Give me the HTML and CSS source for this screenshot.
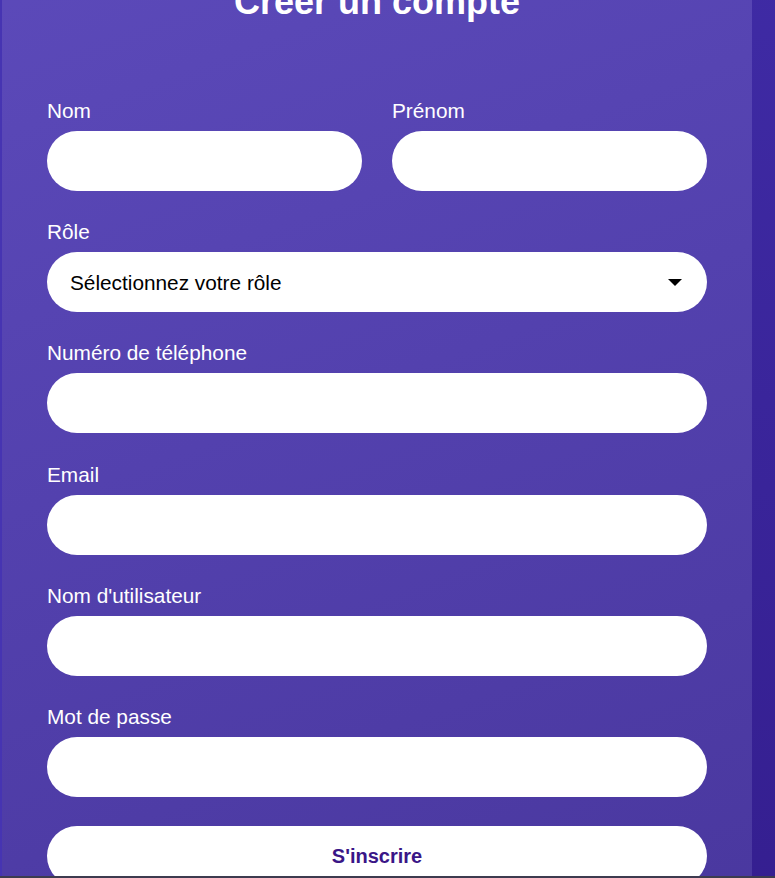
FILE: index.html
```html
<!DOCTYPE html>
<html lang="fr">

<head>
    <meta charset="UTF-8">
    <meta name="viewport" content="width=device-width, initial-scale=1.0">
    <title>Créer un compte</title>
    <link rel="stylesheet" href="styles.css">
</head>

<body>
    <div class="card">
        <h1>Créer un compte</h1>
        <form class="register-form">
            <div class="row">
                <div class="field">
                    <label for="nom">Nom</label>
                    <input type="text" id="nom">
                </div>
                <div class="field">
                    <label for="prenom">Prénom</label>
                    <input type="text" id="prenom">
                </div>
            </div>
            <div class="field">
                <label for="role">Rôle</label>
                <div class="select-wrap">
                    <select id="role">
                        <option value="">Sélectionnez votre rôle</option>
                        <option value="etudiant">Étudiant</option>
                        <option value="enseignant">Enseignant</option>
                    </select>
                </div>
            </div>
            <div class="field">
                <label for="tel">Numéro de téléphone</label>
                <input type="tel" id="tel">
            </div>
            <div class="field">
                <label for="email">Email</label>
                <input type="email" id="email">
            </div>
            <div class="field">
                <label for="username">Nom d'utilisateur</label>
                <input type="text" id="username">
            </div>
            <div class="field">
                <label for="password">Mot de passe</label>
                <input type="password" id="password">
            </div>
            <button type="submit" class="btn">S'inscrire</button>
        </form>
    </div>
    <div class="bottom-bar"></div>

    <script src="script.js"></script>
</body>

</html>
```

FILE: styles.css
```css
* {
    margin: 0;
    padding: 0;
    box-sizing: border-box;
}
body {
    font-family: "Liberation Sans", Arial, sans-serif;
    background: linear-gradient(180deg, #3f2ba5, #341e8f);
    min-height: 100vh;
}
.card {
    width: 752px;
    padding: 40px 45px 60px;
    border-left: 2px solid #4634b2;
    background: linear-gradient(160deg, #5c4aba 0%, #5341ae 45%, #49379e 100%);
}
h1 {
    color: #fff;
    font-size: 36px;
    line-height: 40px;
    text-align: center;
    margin-bottom: 77px;
}
.row {
    display: grid;
    grid-template-columns: 1fr 1fr;
    column-gap: 30px;
}
.field {
    margin-bottom: 29.2px;
}
label {
    display: block;
    color: #fff;
    font-size: 20.8px;
    line-height: 24px;
    margin-bottom: 8px;
}
input,
select {
    display: block;
    width: 100%;
    height: 60px;
    border: none;
    border-radius: 30px;
    background: #fff;
    font-family: inherit;
    font-size: 20.8px;
    color: #000;
    padding: 0 22px;
    outline: none;
}
select {
    appearance: none;
    -webkit-appearance: none;
    padding-left: 23px;
}
.select-wrap {
    position: relative;
}
.select-wrap::after {
    content: "";
    position: absolute;
    right: 25px;
    top: 27px;
    border-left: 7px solid transparent;
    border-right: 7px solid transparent;
    border-top: 7px solid #000;
    pointer-events: none;
}
.btn {
    display: block;
    width: 100%;
    height: 60px;
    margin-top: 1px;
    border: none;
    border-radius: 30px;
    background: #fff;
    color: #3a1687;
    font-family: inherit;
    font-size: 20px;
    font-weight: bold;
    cursor: pointer;
}
.bottom-bar {
    position: fixed;
    left: 0;
    right: 0;
    bottom: 0;
    height: 2px;
    background: #3d3b4f;
}
```

FILE: script.js
```js
window.scrollTo(0, 58);
```
